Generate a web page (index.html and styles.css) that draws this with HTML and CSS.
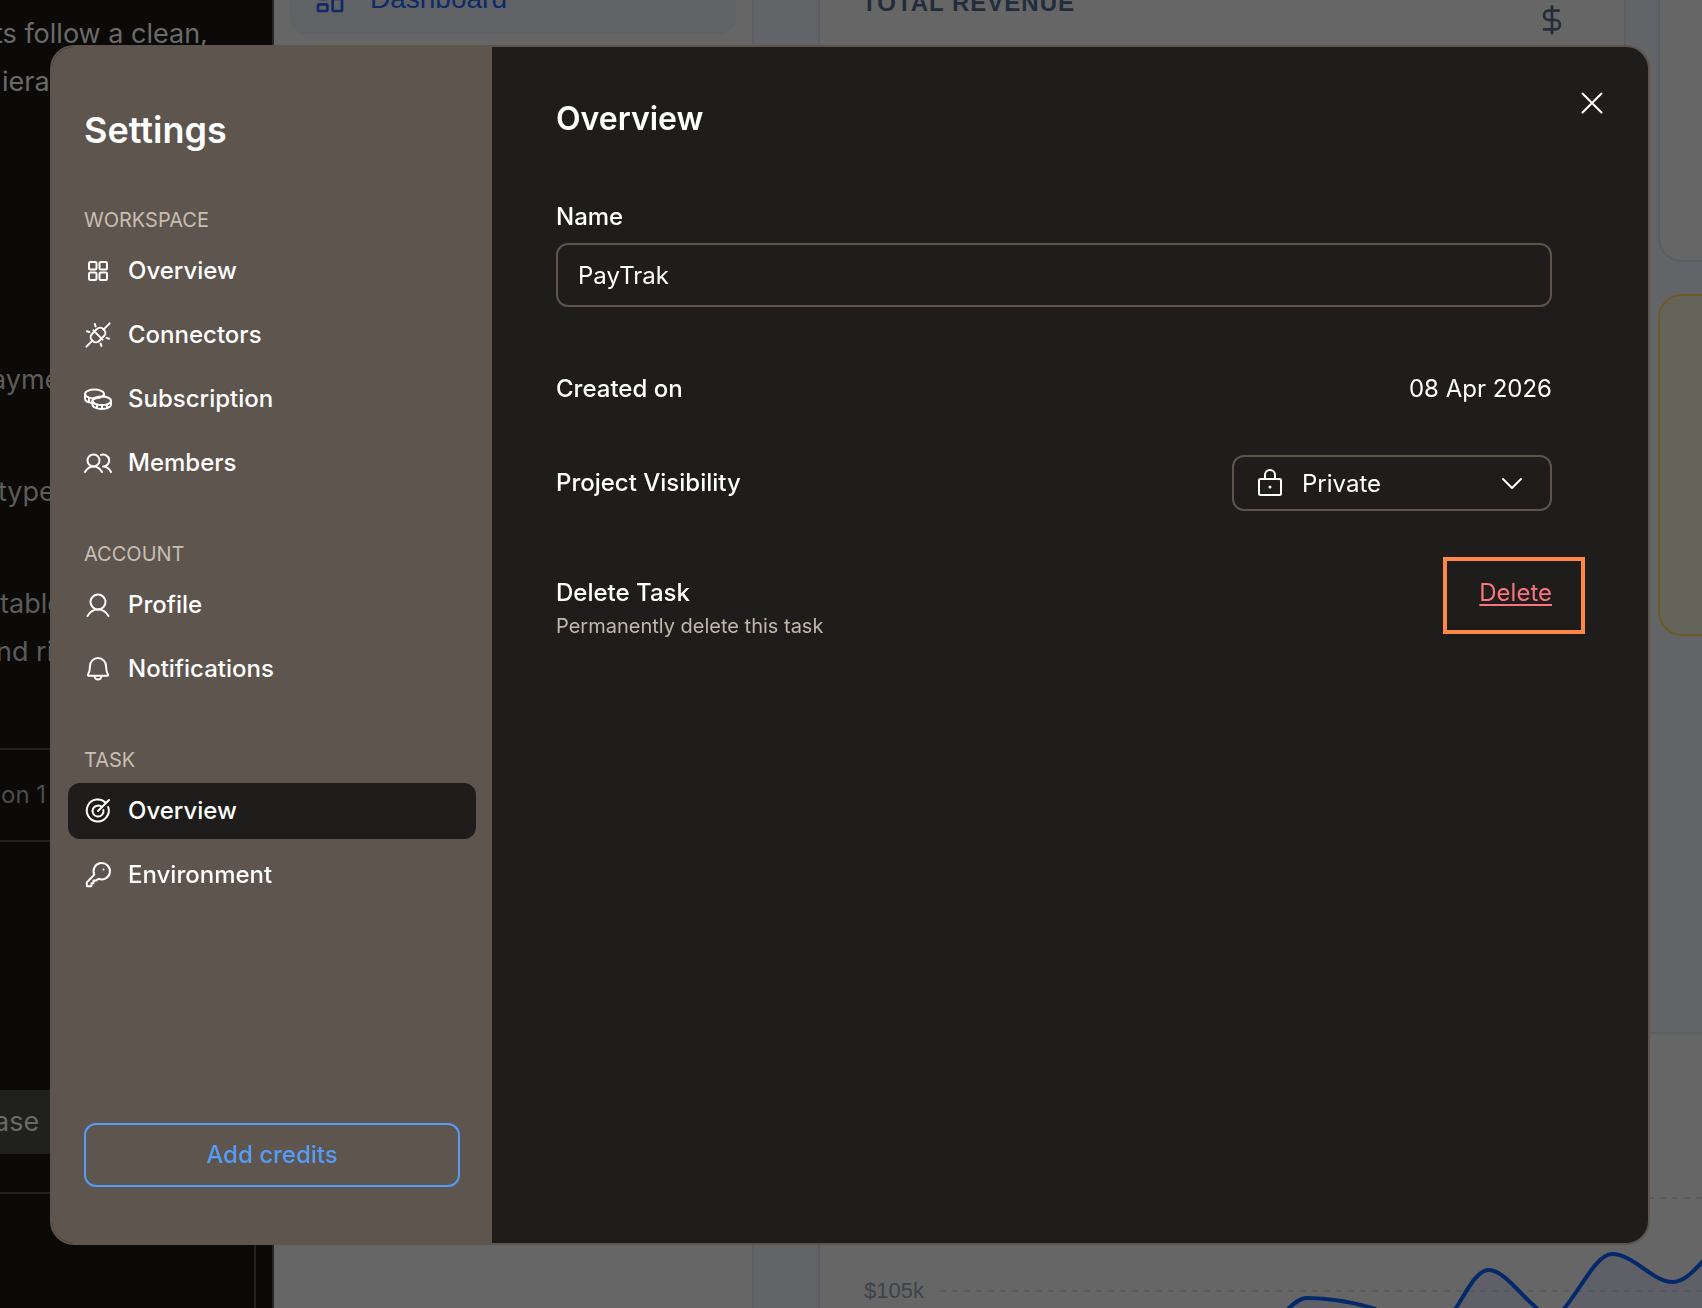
FILE: index.html
```html
<!DOCTYPE html>
<html lang="en">
<head>
<meta charset="utf-8">
<meta name="viewport" content="width=device-width, initial-scale=1">
<title>Settings</title>
<link rel="stylesheet" href="styles.css">
</head>
<body>
<div class="backdrop" aria-hidden="true">
  <section class="chat">
    <div class="message">
      <p>ts follow a clean,</p>
      <p class="indent">iera</p>
    </div>
    <p class="note">ayme</p>
    <p class="note note-types">type</p>
    <div class="note note-table"><p>table</p><p class="outdent">nd ri</p></div>
    <div class="version">on 1</div>
    <div class="phase">ase</div>
    <div class="composer"></div>
  </section>
  <section class="app">
    <nav class="app-nav">
      <div class="app-link">
        <svg width="32" height="32" viewBox="0 0 24 24" fill="none" stroke="currentColor" stroke-width="2"><rect x="3" y="3" width="7" height="9" rx="1"/><rect x="14" y="3" width="7" height="5" rx="1"/><rect x="14" y="12" width="7" height="9" rx="1"/><rect x="3" y="16" width="7" height="5" rx="1"/></svg>
        <span>Dashboard</span>
      </div>
    </nav>
    <div class="app-main">
      <div class="cards">
        <article class="card revenue">
          <h3>TOTAL REVENUE</h3>
          <svg width="32" height="32" viewBox="0 0 24 24" fill="none" stroke="currentColor" stroke-width="2" stroke-linecap="round" stroke-linejoin="round"><path d="M12 2v20M17 5H9.500a3.500 3.500 0 0 0 0 7h5a3.500 3.500 0 0 1 0 7H6"/></svg>
        </article>
        <div class="side-cards">
          <article class="card plain"></article>
          <article class="card warning"></article>
        </div>
      </div>
      <div class="chart">
        <div class="tick tick-high"><span></span><i></i></div>
        <div class="tick"><span>$105k</span><i></i></div>
        <svg class="curve" width="432" height="66" viewBox="1270 1242 432 66"><path class="area" d="M1286 1311C1294 1303 1300 1298 1307 1298C1330 1298 1352 1302 1376 1309V1330H1286ZM1454 1311C1466 1293 1476 1270 1489 1270C1504 1270 1522 1297 1538 1309V1330H1454ZM1562 1311C1580 1291 1596 1254 1612 1254C1634 1254 1652 1282 1673 1282C1684 1282 1694 1271 1706 1258V1330H1562Z"/><path class="line" d="M1286 1311C1294 1303 1300 1298 1307 1298C1330 1298 1352 1302 1376 1309M1454 1311C1466 1293 1476 1270 1489 1270C1504 1270 1522 1297 1538 1309M1562 1311C1580 1291 1596 1254 1612 1254C1634 1254 1652 1282 1673 1282C1684 1282 1694 1271 1706 1258"/></svg>
      </div>
    </div>
  </section>
</div>

<div class="overlay">
  <div class="modal" role="dialog" aria-modal="true" aria-labelledby="settings-title">
    <aside class="sidebar">
      <h1 id="settings-title">Settings</h1>
      <nav class="menu">
        <section>
          <h2>WORKSPACE</h2>
          <a href="#overview"><svg viewBox="0 0 28 28"><rect x="5" y="5" width="7.500" height="7.500" rx="1.500"/><rect x="15.500" y="5" width="7.500" height="7.500" rx="1.500"/><rect x="5" y="15.500" width="7.500" height="7.500" rx="1.500"/><rect x="15.500" y="15.500" width="7.500" height="7.500" rx="1.500"/></svg>Overview</a>
          <a href="#connectors"><svg viewBox="0 0 28 28"><g transform="rotate(-45 14 14)"><rect x="6" y="9" width="16" height="10" rx="4.500"/><path d="M14 7.500v13M6 14H-2.500M22 14h8.500"/></g><path d="M10.800 3l.8 2.500M3 10.300l2.500.8M22.500 16.900l2.500.8M16.600 22.500l.8 2.500"/></svg>Connectors</a>
          <a href="#subscription"><svg viewBox="0 0 28 28"><ellipse cx="10.500" cy="9" rx="9.500" ry="4.500"/><path d="M1 9v4.500c0 2.300 3.300 4 7.500 4.400M20 9v2.600M5 12.800v4M10.500 13.500v.5"/><ellipse cx="17.800" cy="15.800" rx="9.300" ry="4.300"/><path d="M8.500 15.800v3.700c0 2.500 4.200 4.500 9.300 4.500s9.200-2 9.200-4.500v-3.700M13 19.500v3.700M18 20.200V24M23 19.500v3.700"/></svg>Subscription</a>
          <a href="#members"><svg viewBox="0 0 28 28"><circle cx="9.500" cy="11.500" r="6"/><path d="M1 23c2-3.500 5-5.500 8.500-5.500s6.500 2 8.500 5.500M17 5.900a6 6 0 1 1 2 11.600M19 17.500c3.500 0 6.200 2 8 5.500"/></svg>Members</a>
        </section>
        <section>
          <h2>ACCOUNT</h2>
          <a href="#profile"><svg viewBox="0 0 28 28"><circle cx="14" cy="11" r="7.500"/><path d="M3.500 25c2.300-4 6-6.500 10.500-6.500s8.200 2.500 10.500 6.500"/></svg>Profile</a>
          <a href="#notifications"><svg viewBox="0 0 28 28"><path d="M6 11a8 8 0 0 1 16 0c0 4 .9 6.800 2 8.500a.8.800 0 0 1-.7 1.300H4.700a.8.800 0 0 1-.7-1.300c1.100-1.700 2-4.500 2-8.500zM10.500 21a3.500 3.500 0 0 0 7 0"/></svg>Notifications</a>
        </section>
        <section>
          <h2>TASK</h2>
          <a href="#task" class="active" aria-current="page"><svg viewBox="0 0 28 28"><path d="M14 14L25 3M22 6.200A11 11 0 1 0 24.200 10M18 10.300A5.500 5.500 0 1 0 19.400 13"/></svg>Overview</a>
          <a href="#environment"><svg viewBox="0 0 28 28"><path d="M10.300 13.600a8.200 8.200 0 1 1 4.100 4.100L12.300 19.500H9.500v2.800H7.500V24.500a.8.800 0 0 1-.8.800H3.600a.8.800 0 0 1-.8-.8v-3.100z"/><circle cx="19.500" cy="8.500" r="1" fill="currentColor" stroke="none"/></svg>Environment</a>
        </section>
      </nav>
      <button type="button" class="credits">Add credits</button>
    </aside>
    <main class="content">
      <header>
        <h2>Overview</h2>
        <button type="button" class="close" aria-label="Close"><svg viewBox="0 0 28 28"><path d="M4.500 4.500l19 19M23.500 4.500l-19 19"/></svg></button>
      </header>
      <form class="fields">
        <div class="name-field">
          <label for="name">Name</label>
          <input id="name" type="text" value="PayTrak">
        </div>
        <div class="row created"><span class="label">Created on</span><time datetime="2026-04-08">08 Apr 2026</time></div>
        <div class="row visibility">
          <label for="visibility">Project Visibility</label>
          <div class="select">
            <svg class="lock" viewBox="0 0 28 28"><rect x="3" y="10" width="22" height="16" rx="1.500"/><path d="M9 10V6a5 5 0 0 1 10 0v4"/><circle cx="14" cy="18" r="1.500" fill="currentColor" stroke="none"/></svg>
            <select id="visibility"><option>Private</option></select>
            <svg class="chevron" viewBox="0 0 28 28"><path d="M5 10l9 9 9-9"/></svg>
          </div>
        </div>
        <div class="row delete">
          <div><strong class="label">Delete Task</strong><p>Permanently delete this task</p></div>
          <div class="highlight"><button type="button">Delete</button></div>
        </div>
      </form>
    </main>
  </div>
</div>
</body>
</html>
```
FILE: styles.css
```css
* { box-sizing: border-box; }
body, h1, h2, h3, p { margin: 0; }
body {
  min-height: 100vh;
  overflow: hidden;
  background: #0b0a09;
  color: #fff;
  font: 400 24px/32px Inter, sans-serif;
}
button, input, select { font: inherit; color: inherit; }

/* Dimmed workspace behind the dialog */
.backdrop { display: flex; height: 100vh; overflow: hidden; }
.chat {
  display: flex;
  flex-direction: column;
  flex: none;
  width: 274px;
  border-right: 2px solid #292522;
  color: #6a6a68;
  font-size: 27px;
  line-height: 48px;
  white-space: nowrap;
}
.message { height: 346px; margin: 10px 0 0 -6px; }
.message .indent { padding-left: 8px; }
.note { height: 112px; margin-left: -9px; color: #5c5c5a; }
.note-types { margin-left: -2px; }
.note-table { height: 168px; margin-left: 0; }
.outdent { margin-left: -4px; }
.version {
  height: 94px;
  padding-left: 1px;
  border: solid #222;
  border-width: 2px 0;
  color: #4d4d4c;
  font-size: 24px;
  line-height: 90px;
}
.phase {
  height: 64px;
  margin-top: 248px;
  background: #20201f;
  line-height: 64px;
  text-indent: -6px;
}
.composer {
  flex: 1;
  margin: 38px 16px 0 0;
  border: solid #222;
  border-width: 2px 2px 0 0;
}
.app {
  display: flex;
  flex: 1;
  min-width: 0;
  background: #636467;
  font-family: "Liberation Sans", sans-serif;
}
.app-nav {
  flex: none;
  width: 480px;
  padding: 0 16px;
  border-right: 2px solid #5b5e63;
  background: #666;
}
.app-link {
  display: flex;
  gap: 24px;
  height: 34px;
  padding-left: 24px;
  border-radius: 0 0 16px 16px;
  background: #606266;
  color: #0f2a66;
  font-size: 28px;
}
.app-link svg, .app-link span { margin-top: -17px; }
.app-main { display: flex; flex: 1; flex-direction: column; min-width: 0; padding-left: 64px; }
.cards { display: flex; gap: 32px; height: 1032px; }
.card { border: 2px solid #5b5e63; background: #666; }
.revenue {
  display: flex;
  flex: none;
  justify-content: space-between;
  width: 808px;
  height: 200px;
  padding: 0 56px 0 42px;
  border-top: 0;
  color: #232c3b;
}
.revenue h3 { margin-top: -13px; font-size: 24px; letter-spacing: 1px; }
.revenue svg { margin-top: 4px; }
.side-cards { flex: none; width: 400px; }
.plain { height: 262px; border-top: 0; border-radius: 0 0 24px 24px; }
.warning { height: 342px; margin-top: 32px; border-color: #6b5a24; border-radius: 24px; background: #64635a; }
.chart {
  position: relative;
  flex: 1;
  border: solid #5b5e63;
  border-width: 2px 0 0 2px;
  background: #666;
  color: #3d434d;
  font-size: 22px;
}
.tick { display: flex; align-items: center; gap: 16px; height: 34px; padding-left: 44px; }
.tick-high { margin: 147px 0 59px; }
.tick span { width: 60px; }
.tick i { flex: 1; height: 2px; background: repeating-linear-gradient(90deg, #5a5d60 0 6px, transparent 6px 12px); }
.curve { position: absolute; right: 0; bottom: 0; }
.area { fill: #23307a; fill-opacity: .09; }
.line { fill: none; stroke: #04296b; stroke-width: 4; }

/* Dialog */
.overlay { position: fixed; inset: 0; display: flex; padding: 45px 52px 63px 50px; }
.modal {
  display: flex;
  flex: 1;
  overflow: hidden;
  border: 2px solid #5d554c;
  border-radius: 24px;
  background: #1e1d1b;
}
.sidebar {
  display: flex;
  flex-direction: column;
  flex: none;
  width: 440px;
  padding: 59px 16px 56px;
  background: #5d554e;
}
.sidebar h1 { padding-left: 16px; font-size: 36px; font-weight: 600; line-height: 48px; }
.menu { display: flex; flex: 1; flex-direction: column; gap: 47px; margin-top: 50px; }
.menu section { display: flex; flex-direction: column; gap: 8px; }
.menu h2 { margin-bottom: -1px; padding: 0 16px; color: #c8beb2; font-size: 20px; font-weight: 400; line-height: 32px; }
.menu a {
  display: flex;
  align-items: center;
  gap: 16px;
  height: 56px;
  padding: 0 16px;
  border-radius: 12px;
  color: #fff;
  font-weight: 500;
  text-decoration: none;
}
.menu .active { background: #1e1d1b; }
svg { flex: none; }
.modal svg { width: 28px; height: 28px; fill: none; stroke: currentColor; stroke-width: 2; stroke-linecap: round; stroke-linejoin: round; }
.credits {
  height: 64px;
  margin: 0 16px;
  border: 2px solid #559bf8;
  border-radius: 12px;
  background: none;
  color: #559bf8;
  font-weight: 500;
}
.content { flex: 1; min-width: 0; padding: 40px 40px 40px 64px; }
.content header { display: flex; justify-content: space-between; }
.content header h2 { margin-top: 12px; font-size: 32px; font-weight: 600; line-height: 40px; }
.close { display: flex; width: 32px; height: 32px; padding: 2px; border: 0; background: none; }
.fields { padding-right: 56px; }
.name-field { display: flex; flex-direction: column; gap: 10px; margin-top: 62px; }
.name-field label, .row label, .label { font-weight: 500; }
.name-field input { height: 64px; padding: 0 20px; border: 2px solid #5d554c; border-radius: 12px; background: none; }
.row { display: flex; align-items: center; justify-content: space-between; }
.created { margin-top: 66px; }
.visibility { margin-top: 50px; }
.select { display: grid; align-items: center; width: 320px; height: 56px; border: 2px solid #5d554c; border-radius: 12px; }
.select > * { grid-area: 1 / 1; }
.select select { width: 100%; height: 100%; padding: 2px 68px 0; border: 0; appearance: none; background: none; }
.lock { margin-left: 22px; }
.chevron { justify-self: end; margin-right: 24px; }
.delete { align-items: flex-start; margin-top: 46px; }
.delete > div:first-child { padding-top: 20px; }
.delete p { color: #c0b8ab; font-size: 20px; line-height: 34px; }
.highlight { height: 77px; margin-right: -33px; padding: 16px 29px 0 32px; border: 4px solid #ff8748; }
.highlight button { display: block; padding: 0; border: 0; background: none; color: #f8747f; text-decoration: underline; text-decoration-thickness: 2px; text-underline-offset: 3px; }
```
